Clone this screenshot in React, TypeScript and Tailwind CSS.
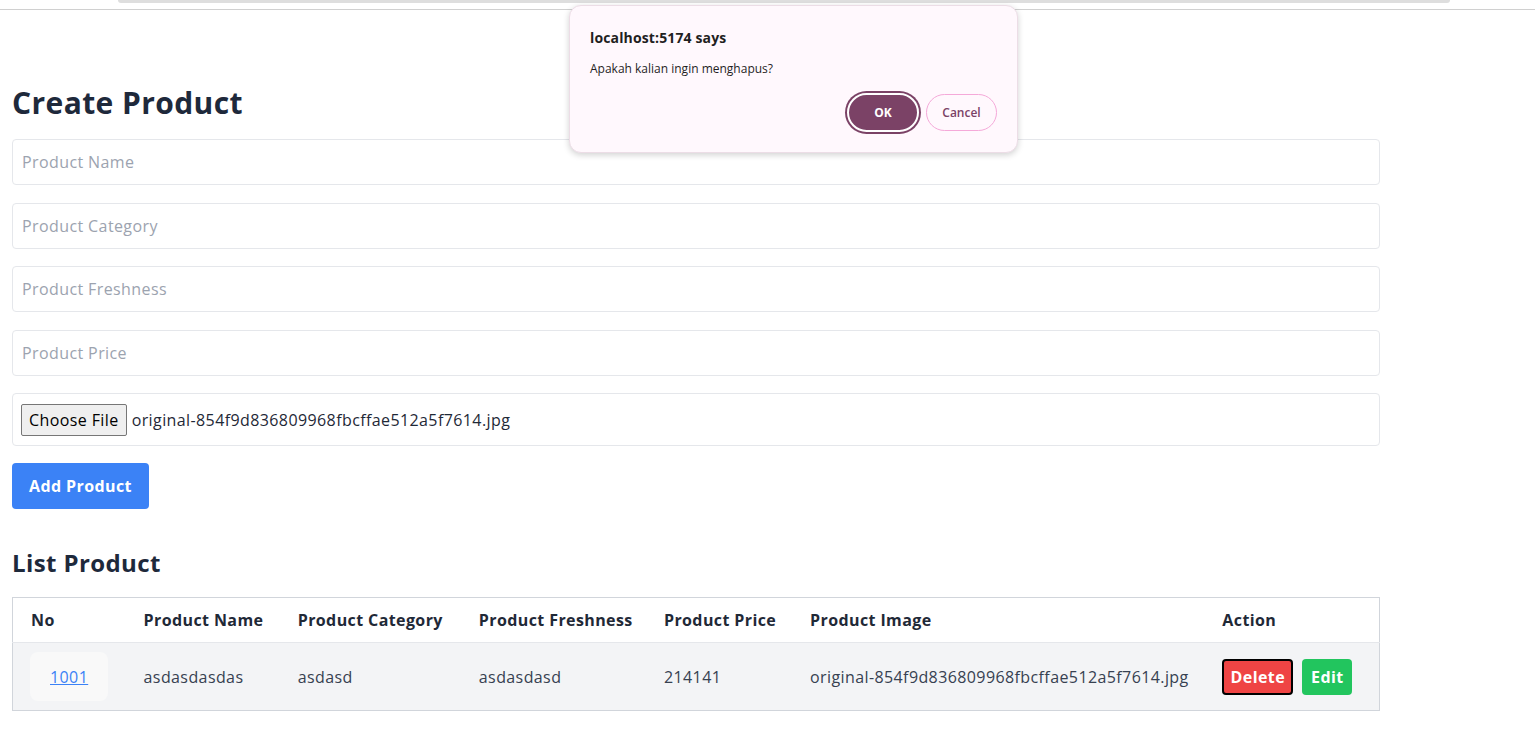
import React from 'react';

export default function App() {
  const fields = ['Product Name', 'Product Category', 'Product Freshness', 'Product Price'];
  const fileName = 'original-854f9d836809968fbcffae512a5f7614.jpg';

  return (
    <div className="relative min-h-screen bg-white text-[#1f2937] font-['Open_Sans',sans-serif]">
      {/* browser strip */}
      <div className="h-[10px] border-b border-[#d0d0d0] px-[118px]">
        <div className="h-[3px] rounded-b-full bg-[#dedede] w-[1332px]"></div>
      </div>

      <div className="px-[12px] pt-[75px] w-[1392px] tracking-[0.025em]">
        <h1 className="text-[30px] leading-[36px] font-bold text-[#1e293b] mb-[18px]">Create Product</h1>

        <div className="flex flex-col gap-[17.5px]">
          {fields.map((f) => (
            <input
              key={f}
              placeholder={f}
              className="h-[46px] w-full border border-[#e5e7eb] rounded-[4px] px-[9px] text-[16px] tracking-[0.025em] placeholder:text-[#9ca3af] outline-none"
            />
          ))}
          <div className="h-[53px] w-full border border-[#e5e7eb] rounded-[4px] px-[8px] flex items-center gap-[5px] text-[16px]">
            <span className="h-[32px] px-[7px] flex items-center bg-[#efefef] border border-[#767676] rounded-[2px] text-black">Choose File</span>
            <span className="text-[#1f2937]">{fileName}</span>
          </div>
        </div>

        <button className="mt-[17px] h-[46px] w-[137px] bg-[#3b82f6] text-white font-bold text-[16px] rounded-[4px]">Add Product</button>

        <h2 className="mt-[38px] text-[24px] leading-[32px] font-bold text-[#1e293b] mb-[18px]">List Product</h2>

        <table className="table-fixed w-[1368px] border border-[#d1d5db] border-collapse text-[16px]">
          <thead>
            <tr className="h-[45px] text-left text-[#1f2937]">
              <th className="w-[113px] pl-[18px] font-bold">No</th>
              <th className="w-[154px] pl-[18px] font-bold">Product Name</th>
              <th className="w-[181px] pl-[18px] font-bold">Product Category</th>
              <th className="w-[185px] pl-[18px] font-bold">Product Freshness</th>
              <th className="w-[146px] pl-[18px] font-bold">Product Price</th>
              <th className="w-[412px] pl-[18px] font-bold">Product Image</th>
              <th className="w-[175px] pl-[18px] font-bold">Action</th>
            </tr>
          </thead>
          <tbody>
            <tr className="h-[68px] bg-[#f3f4f6] border-t border-[#e5e7eb] text-[#374151]">
              <td className="pl-[17px]">
                <span className="inline-flex items-center h-[49px] px-[20px] rounded-[8px] bg-[#f9f9f9] text-[#3b82f6] underline">1001</span>
              </td>
              <td className="pl-[18px]">asdasdasdas</td>
              <td className="pl-[18px]">asdasd</td>
              <td className="pl-[18px]">asdasdasd</td>
              <td className="pl-[18px]">214141</td>
              <td className="pl-[18px]">{fileName}</td>
              <td className="pl-[18px]">
                <div className="flex gap-[9px]">
                  <button className="h-[36px] w-[71px] bg-[#ef4444] border-2 border-black rounded-[4px] text-white font-bold">Delete</button>
                  <button className="h-[36px] w-[50px] bg-[#22c55e] rounded-[4px] text-white font-bold">Edit</button>
                </div>
              </td>
            </tr>
          </tbody>
        </table>
      </div>

      {/* alert dialog */}
      <div className="absolute left-[569px] top-[5px] w-[449px] h-[148px] rounded-[12px] bg-[#fff8fd] border border-[#ecdde6] shadow-[0_2px_6px_rgba(0,0,0,0.18)] px-[20px] pt-[22px]">
        <div className="text-[14px] font-bold text-[#1f1f1f] leading-[20px] tracking-[0.01em]">localhost:5174 says</div>
        <div className="mt-[13px] text-[12px] text-[#1f1f1f] leading-[16px]">Apakah kalian ingin menghapus?</div>
        <div className="mt-[16px] flex justify-end items-center gap-[7px]">
          <button className="h-[39px] w-[72px] rounded-full bg-[#7b4266] border-2 border-white ring-2 ring-[#7b4266] text-white text-[12px] font-bold">OK</button>
          <button className="h-[37px] w-[71px] rounded-full border border-[#f5a9d9] text-[#7b4266] text-[12px] font-semibold">Cancel</button>
        </div>
      </div>
    </div>
  );
}
